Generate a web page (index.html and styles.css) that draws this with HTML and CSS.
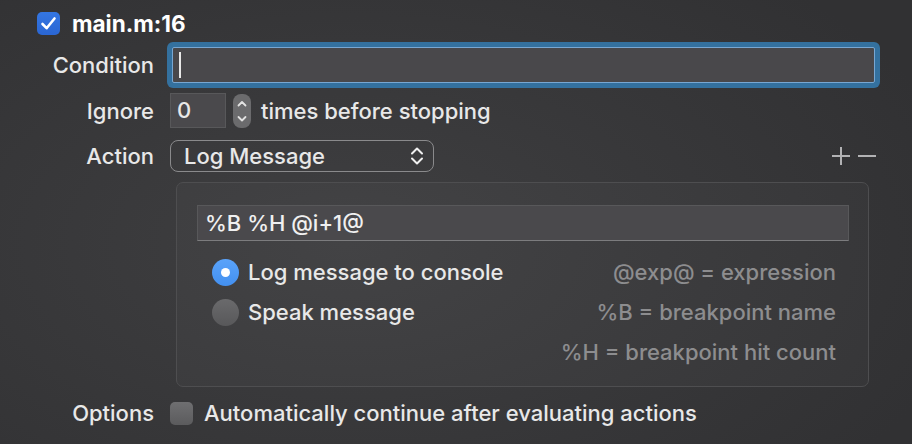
FILE: index.html
```html
<!DOCTYPE html>
<html>
<head>
<meta charset="utf-8">
<link rel="stylesheet" href="styles.css">
</head>
<body>
<div class="panel">
  <div class="title-row">
    <span class="check on"><svg width="23" height="23" viewBox="0 0 23 23"><path d="M5.5 12 L9.6 16.2 L17.5 6.5" fill="none" stroke="#fff" stroke-width="2.6" stroke-linecap="round" stroke-linejoin="round"/></svg></span>
    <span class="title">main.m:16</span>
  </div>

  <div class="row cond">
    <div class="label">Condition</div>
    <div class="cond-field"><span class="caret"></span></div>
  </div>

  <div class="row ignore">
    <div class="label">Ignore</div>
    <div class="num-field">0</div>
    <svg class="stepper" width="18" height="34" viewBox="0 0 18 34">
      <rect x="0" y="0" width="18" height="34" rx="8" fill="#6b6b6d"/>
      <path d="M5.5 11.5 L9 8 L12.5 11.5" fill="none" stroke="#e2e2e2" stroke-width="1.8" stroke-linecap="round" stroke-linejoin="round"/>
      <path d="M5.5 23 L9 26.5 L12.5 23" fill="none" stroke="#e2e2e2" stroke-width="1.8" stroke-linecap="round" stroke-linejoin="round"/>
    </svg>
    <span class="after">times before stopping</span>
  </div>

  <div class="row action">
    <div class="label">Action</div>
    <div class="popup">
      <span>Log Message</span>
      <svg width="14" height="20" viewBox="0 0 14 20">
        <path d="M2 7.5 L7 2.5 L12 7.5" fill="none" stroke="#f0f0f0" stroke-width="2" stroke-linecap="round" stroke-linejoin="round"/>
        <path d="M2 12.5 L7 17.5 L12 12.5" fill="none" stroke="#f0f0f0" stroke-width="2" stroke-linecap="round" stroke-linejoin="round"/>
      </svg>
    </div>
    <div class="plusminus">
      <svg width="18" height="18" viewBox="0 0 18 18"><path d="M9 0 V18 M0 9 H18" stroke="#b2b2b4" stroke-width="2"/></svg>
      <svg width="18" height="18" viewBox="0 0 18 18"><path d="M0 9 H18" stroke="#b2b2b4" stroke-width="2"/></svg>
    </div>
  </div>

  <div class="row boxrow">
    <div class="label"></div>
    <div class="box">
      <div class="msg-field">%B %H @i+1@</div>
      <div class="opts">
        <div class="radios">
          <div class="radio-row"><span class="radio on"><span class="dot"></span></span><span>Log message to console</span></div>
          <div class="radio-row"><span class="radio"></span><span>Speak message</span></div>
        </div>
        <div class="hints">
          <div class="hint">@exp@ = expression</div>
          <div class="hint">%B = breakpoint name</div>
          <div class="hint">%H = breakpoint hit count</div>
        </div>
      </div>
    </div>
  </div>

  <div class="row options">
    <div class="label">Options</div>
    <span class="check off"></span>
    <span class="after2">Automatically continue after evaluating actions</span>
  </div>
</div>
</body>
</html>
```

FILE: styles.css
```css
html, body {
  margin: 0;
  padding: 0;
}
body {
  width: 912px;
  height: 444px;
  overflow: hidden;
  background:
    radial-gradient(ellipse 70% 80% at 38% 55%, #3f3f41 0%, #38383a 50%, #313133 100%);
  font-family: "Inter", "Noto Sans", sans-serif;
  font-size: 22px;
  font-weight: 500;
  color: #e8e8e8;
}
.panel {
  padding-top: 12px;
}
.title-row {
  display: flex;
  align-items: center;
  height: 23px;
  padding-left: 37px;
}
.check {
  display: inline-block;
  width: 23px;
  height: 23px;
  border-radius: 5px;
  box-sizing: border-box;
  flex: none;
}
.check svg { display: block; }
.check.on {
  background: linear-gradient(#3476e2, #2a66d3);
}
.check.off {
  background: linear-gradient(#6f6f71, #5b5b5d);
}
.title {
  margin-left: 12px;
  font-weight: 700;
  font-size: 22.5px;
  color: #ffffff;
}
.row {
  display: flex;
  align-items: center;
  padding-right: 36px;
}
.label {
  width: 154px;
  flex: none;
  text-align: right;
  margin-right: 16px;
}
.cond {
  margin-top: 12px;
}
.cond-field {
  margin-left: 2px;
  width: 703px;
  height: 36px;
  box-sizing: border-box;
  border: 1px solid #78a7d2;
  border-radius: 2px;
  background: #49484b;
  box-shadow: 0 0 0 5px #34719f;
  display: flex;
  align-items: center;
}
.caret {
  display: block;
  width: 2px;
  height: 26px;
  margin-left: 6px;
  background: #e8e8e8;
}
.ignore {
  margin-top: 10px;
}
.num-field {
  width: 56px;
  height: 35px;
  box-sizing: border-box;
  background: #4a494c;
  border: 1px solid #58585a;
  padding-left: 6px;
  line-height: 33px;
}
.stepper {
  margin-left: 7px;
  flex: none;
}
.after {
  margin-left: 10px;
}
.action {
  margin-top: 12px;
}
.popup {
  width: 264px;
  height: 32px;
  box-sizing: border-box;
  border: 1.5px solid #8a8a8c;
  border-radius: 8px;
  display: flex;
  align-items: center;
  justify-content: space-between;
  padding: 0 9px 0 13px;
}
.popup svg { display: block; }
.plusminus {
  margin-left: auto;
  display: flex;
  gap: 8px;
}
.plusminus svg { display: block; }
.boxrow {
  margin-top: 10px;
  align-items: flex-start;
}
.box {
  margin-left: 6px;
  width: 693px;
  height: 205px;
  box-sizing: border-box;
  border: 1px solid #4e4e50;
  border-radius: 7px;
  background: rgba(255, 255, 255, 0.025);
  padding: 22px 19px 0 20px;
}
.msg-field {
  height: 36px;
  box-sizing: border-box;
  background: #4a494c;
  border: 1px solid #58585a;
  border-bottom-color: #7c7c7e;
  padding-left: 7px;
  line-height: 34px;
  color: #f0f0f0;
}
.opts {
  display: flex;
  justify-content: space-between;
  margin-top: 11px;
}
.radios {
  padding-left: 15px;
}
.radio-row {
  height: 40px;
  display: flex;
  align-items: center;
}
.radio {
  width: 27px;
  height: 27px;
  border-radius: 50%;
  box-sizing: border-box;
  margin-right: 9px;
  background: linear-gradient(#6a6a6c, #58585a);
  display: flex;
  align-items: center;
  justify-content: center;
  flex: none;
}
.radio.on {
  background: linear-gradient(#5aa3fa, #4390f0);
}
.dot {
  width: 9px;
  height: 9px;
  border-radius: 50%;
  background: #ffffff;
}
.hints {
  padding-right: 13px;
  text-align: right;
  color: #8d8d8f;
}
.hint {
  height: 40px;
  line-height: 40px;
}
.options {
  margin-top: 13px;
}
.after2 {
  margin-left: 11px;
}
```
